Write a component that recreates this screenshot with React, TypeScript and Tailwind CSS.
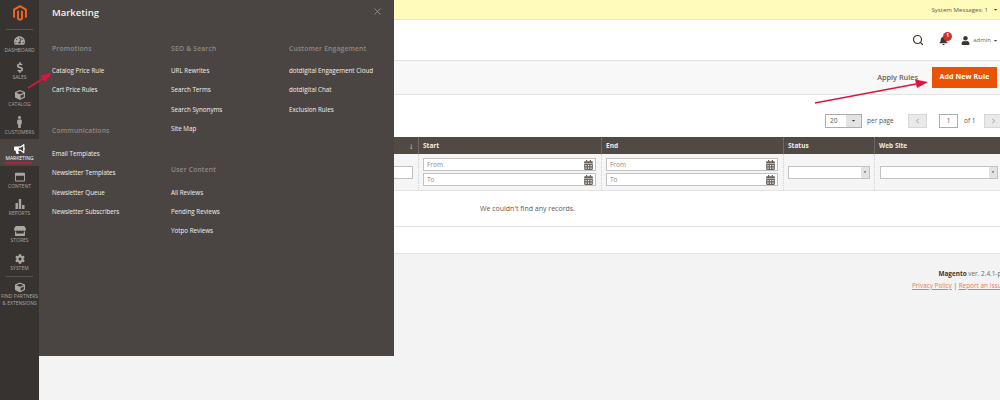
import type { ReactNode } from "react";
import { Search, X } from "lucide-react";
import { SiMagento } from "react-icons/si";
import {
  FaBell,
  FaBullhorn,
  FaCalendarAlt,
  FaCaretDown,
  FaChevronLeft,
  FaChevronRight,
  FaCog,
  FaCube,
  FaDollarSign,
  FaMale,
  FaRegWindowMaximize,
  FaStore,
  FaTachometerAlt,
  FaUser,
} from "react-icons/fa";

const ReportsIcon = () => (
  <svg viewBox="0 0 10 10" className="w-[10px] h-[10px]" fill="currentColor">
    <rect x="0.5" y="4" width="2.4" height="6" />
    <rect x="3.8" y="0" width="2.4" height="10" />
    <rect x="7.1" y="6" width="2.4" height="4" />
  </svg>
);

const navItems: { label: string; icon: ReactNode; active?: boolean }[] = [
  { label: "Dashboard", icon: <FaTachometerAlt className="w-[11px] h-[11px]" /> },
  { label: "Sales", icon: <FaDollarSign className="w-[10px] h-[11px]" /> },
  { label: "Catalog", icon: <FaCube className="w-[10px] h-[10px]" /> },
  { label: "Customers", icon: <FaMale className="w-[11px] h-[12px]" /> },
  { label: "Marketing", icon: <FaBullhorn className="w-[11px] h-[10px] text-white" />, active: true },
  { label: "Content", icon: <FaRegWindowMaximize className="w-[10px] h-[10px]" /> },
  { label: "Reports", icon: <ReportsIcon /> },
  { label: "Stores", icon: <FaStore className="w-[12px] h-[10px]" /> },
  { label: "System", icon: <FaCog className="w-[10px] h-[10px]" /> },
];

const menuColumns = [
  [
    { title: "Promotions", links: ["Catalog Price Rule", "Cart Price Rules"] },
    {
      title: "Communications",
      links: ["Email Templates", "Newsletter Templates", "Newsletter Queue", "Newsletter Subscribers"],
    },
  ],
  [
    { title: "SEO & Search", links: ["URL Rewrites", "Search Terms", "Search Synonyms", "Site Map"] },
    { title: "User Content", links: ["All Reviews", "Pending Reviews", "Yotpo Reviews"] },
  ],
  [
    {
      title: "Customer Engagement",
      links: ["dotdigital Engagement Cloud", "dotdigital Chat", "Exclusion Rules"],
    },
  ],
];

const Sidebar = () => (
  <aside className="w-[39px] shrink-0 h-full bg-[#373330] flex flex-col items-stretch">
    <div className="h-[30px] mx-[6px] flex items-start justify-center pt-[4px] border-b border-[#5a5551]">
      <SiMagento className="w-[16px] h-[18px] text-[#f26322]" />
    </div>
    <div>
      {navItems.map((item) => (
        <div
          key={item.label}
          className={`h-[27.3px] flex flex-col items-center justify-center gap-[1px] ${
            item.active ? "bg-[#4a4542] text-white" : "text-[#aaa6a0]"
          }`}
        >
          {item.icon}
          <span className="text-[5px] leading-[6px] uppercase">{item.label}</span>
        </div>
      ))}
    </div>
    <div className="mx-[6px] pt-[5px] border-t border-[#5a5551] flex flex-col items-center text-[#aaa6a0]">
      <FaCube className="w-[10px] h-[11px]" />
      <span className="text-[5px] leading-[7px] uppercase text-center whitespace-nowrap">Find Partners</span>
      <span className="text-[5px] leading-[7px] uppercase text-center whitespace-nowrap">&amp; Extensions</span>
    </div>
  </aside>
);

const Flyout = () => (
  <div className="absolute left-[39px] top-0 w-[355px] h-[356px] bg-[#4a4542] pl-[13px]">
    <div className="h-[39px] flex items-start justify-between pt-[5px] pr-[11px]">
      <h1 className="text-[9.5px] leading-[14px] mt-[1px] font-semibold text-[#f7f3eb]">Marketing</h1>
      <X className="w-[11px] h-[11px] mt-[1px] text-[#aaa6a0]" strokeWidth={1.5} />
    </div>
    <div className="grid grid-cols-[119px_118px_1fr]">
      {menuColumns.map((col, i) => (
        <div key={i} className="flex flex-col gap-[22px]">
          {col.map((group) => (
            <div key={group.title}>
              <h2 className="h-[19.4px] mb-[2.6px] flex items-center text-[6.7px] font-semibold tracking-[0.2px] text-[#8f8a85]">
                {group.title}
              </h2>
              {group.links.map((link) => (
                <div key={link} className="h-[19.4px] flex items-center text-[6.25px] text-[#f3f1ee] whitespace-nowrap">
                  {link}
                </div>
              ))}
            </div>
          ))}
        </div>
      ))}
    </div>
  </div>
);

const TopBars = () => (
  <>
    <div className="h-[20px] bg-[#fffbbb] border-b border-[#ece8b0] flex items-center justify-end gap-[5px] pr-[1px]">
      <span className="text-[6.1px] text-[#5c5a4a]">System Messages: 1</span>
      <FaCaretDown className="w-[5px] h-[5px] text-[#41362f] mr-[1px]" />
    </div>
    <div className="h-[41px] bg-white border-b border-[#e3e3e3] flex items-center justify-end pr-[2px]">
      <Search className="w-[12px] h-[12px] text-[#41362f]" strokeWidth={2.4} />
      <div className="relative ml-[15px]">
        <FaBell className="w-[9px] h-[9px] text-[#41362f]" />
        <span className="absolute -top-[4px] left-[4px] w-[9px] h-[9px] rounded-full bg-[#d32f2f] text-white text-[5px] font-bold flex items-center justify-center">
          1
        </span>
      </div>
      <FaUser className="w-[9px] h-[9px] ml-[13px] text-[#41362f]" />
      <span className="ml-[3px] text-[6px] text-[#6b6560]">admin</span>
      <FaCaretDown className="w-[5px] h-[5px] ml-[2px] text-[#41362f]" />
    </div>
    <div className="h-[34px] bg-[#f8f8f8] border-b border-[#e3e3e3] flex items-center justify-end pr-[3px]">
      <span className="text-[7.3px] font-semibold text-[#666059]">Apply Rules</span>
      <button className="ml-[14px] w-[65px] h-[21px] bg-[#eb5202] text-white text-[7px] font-bold tracking-[0.1px]">
        Add New Rule
      </button>
    </div>
  </>
);

const Pager = () => (
  <div className="h-[42px] bg-white flex items-center pl-[786px] pt-[9px] text-[6.5px] text-[#555] whitespace-nowrap">
    <div className="w-[37px] h-[14px] shrink-0 border border-[#adadad] flex">
      <span className="flex-1 pl-[4px] flex items-center">20</span>
      <span className="w-[15px] bg-[#e3e3e3] flex items-center justify-center">
        <FaCaretDown className="w-[5px] h-[5px] text-[#41362f]" />
      </span>
    </div>
    <span className="ml-[5px] w-[25px]">per page</span>
    <div className="ml-[16px] w-[19px] h-[14px] shrink-0 bg-[#e9e9e9] border border-[#d6d6d6] flex items-center justify-center">
      <FaChevronLeft className="w-[5px] h-[6px] text-[#b5b5b5]" />
    </div>
    <div className="ml-[12px] w-[19px] h-[14px] shrink-0 border border-[#adadad] flex items-center justify-center">1</div>
    <span className="ml-[6px] w-[12px]">of 1</span>
    <div className="ml-[8px] w-[19px] h-[14px] shrink-0 bg-[#e9e9e9] border border-[#d6d6d6] flex items-center justify-center">
      <FaChevronRight className="w-[5px] h-[6px] text-[#b5b5b5]" />
    </div>
  </div>
);

const DateInput = ({ label }: { label: string }) => (
  <div className="h-[13.5px] bg-white border border-[#c2c2c2] flex items-center justify-between pl-[3px] pr-[2px]">
    <span className="text-[6.5px] text-[#8a8a8a]">{label}</span>
    <FaCalendarAlt className="w-[9px] h-[10px] text-[#6b645e]" />
  </div>
);

const SelectBox = () => (
  <div className="h-[13px] bg-white border border-[#c2c2c2] flex justify-end">
    <span className="w-[8px] bg-[#e3e3e3] flex items-center justify-center">
      <FaCaretDown className="w-[4px] h-[4px] text-[#41362f]" />
    </span>
  </div>
);

const RulesTable = () => (
  <div className="w-[976px]">
    <div className="h-[17px] grid grid-cols-[380px_183px_182px_91px_140px] bg-[#514943] text-[6.5px] font-bold text-[#f0ece6]">
      <div className="flex items-center justify-end pr-[5px] border-r border-[#6f6862] text-[8px] font-normal">↓</div>
      {["Start", "End", "Status", "Web Site"].map((h) => (
        <div key={h} className="flex items-center pl-[4px] border-r border-[#6f6862]">
          {h}
        </div>
      ))}
    </div>
    <div className="h-[37px] grid grid-cols-[380px_183px_182px_91px_140px] bg-[#f5f5f5] border-b border-[#e3e3e3]">
      <div className="flex items-center justify-end pr-[5px] border-r border-dotted border-[#d1d1d1]">
        <div className="w-[40px] h-[13px] bg-white border border-[#c2c2c2]" />
      </div>
      {["start", "end"].map((k) => (
        <div key={k} className="flex flex-col justify-center gap-[1.5px] pl-[4px] pr-[5px] border-r border-dotted border-[#d1d1d1]">
          <DateInput label="From" />
          <DateInput label="To" />
        </div>
      ))}
      <div className="flex flex-col justify-center pl-[4px] pr-[4px] border-r border-dotted border-[#d1d1d1]">
        <SelectBox />
      </div>
      <div className="flex flex-col justify-center pl-[5px] pr-[17px]">
        <SelectBox />
      </div>
    </div>
    <div className="h-[36px] bg-white border-b border-[#e3e3e3] flex items-center pl-[441px] pt-[2px] text-[7px] text-[#5f5852]">
      We couldn't find any records.
    </div>
  </div>
);

const Footer = () => (
  <footer className="flex-1 w-[966px] bg-[#f3f3f3] border-t border-[#e3e3e3] mt-[26px] pt-[14px] text-right text-[6.4px] leading-[12px]">
    <p className="text-[#6b6560]">
      <span className="font-bold text-[#41362f]">Magento</span> ver. 2.4.1-p1
    </p>
    <p className="text-[#5f5852]">
      <span className="text-[#e87a5a] underline">Privacy Policy</span> |{" "}
      <span className="text-[#e87a5a] underline">Report an Issue</span>
    </p>
  </footer>
);

const Annotations = () => (
  <svg className="absolute inset-0 pointer-events-none" width="1000" height="400" viewBox="0 0 1000 400">
    <path d="M28 88 L44 78" stroke="#e0133f" strokeWidth="1.6" />
    <path d="M52 73 L40 75.5 L45 82 Z" fill="#e0133f" />
    <path d="M815 103 L916 84" stroke="#e0133f" strokeWidth="1.3" />
    <path d="M928 82 L915 79.5 L917 88 Z" fill="#e0133f" />
    <path d="M5 163 L32 163" stroke="#e0133f" strokeWidth="1.4" />
  </svg>
);

export default function App() {
  return (
    <div className="relative w-[1000px] h-[400px] overflow-hidden flex bg-white font-['Open_Sans',sans-serif]">
      <Sidebar />
      <main className="w-[961px] shrink-0 h-full flex flex-col">
        <TopBars />
        <Pager />
        <RulesTable />
        <Footer />
      </main>
      <Flyout />
      <Annotations />
    </div>
  );
}
